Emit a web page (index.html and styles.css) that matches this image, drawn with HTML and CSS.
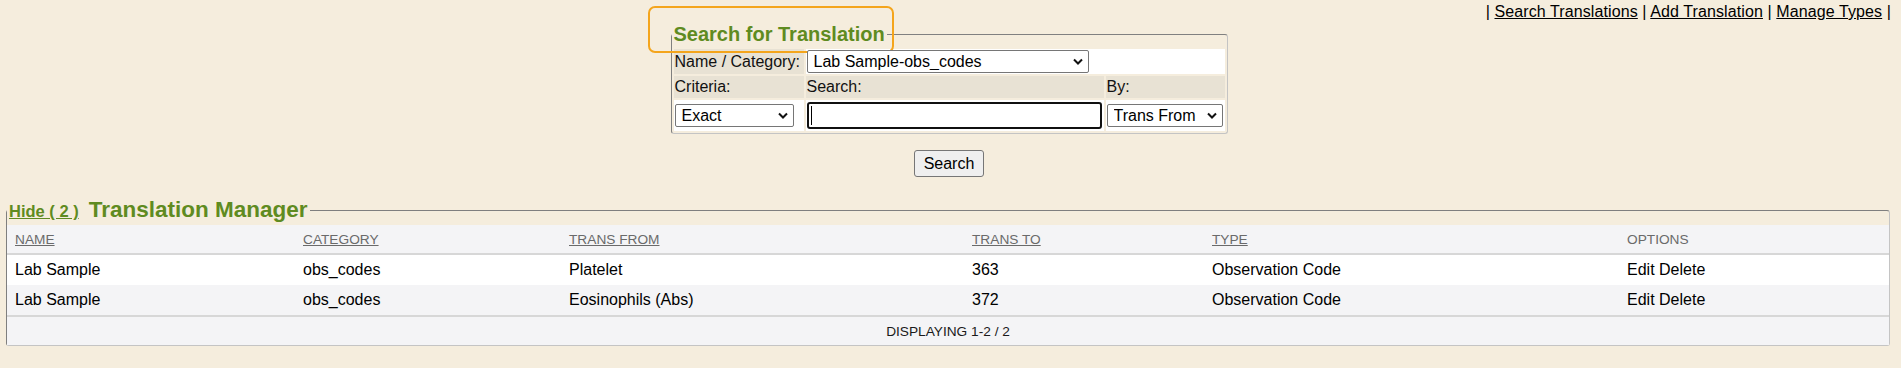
FILE: index.html
```html
<!DOCTYPE html>
<html>
<head>
<meta charset="utf-8">
<title>Translation Manager</title>
<link rel="stylesheet" href="styles.css">
</head>
<body>
<div class="toplinks">| <a href="#">Search Translations</a> | <a href="#">Add Translation</a> | <a href="#">Manage Types</a> |</div>

<div class="search-wrap">
  <form class="search-form">
    <fieldset class="search-set">
      <legend class="search-legend">Search for Translation<span class="focus-ring"></span></legend>
      <table class="search-table">
        <colgroup><col class="sc1"><col class="sc2"><col class="sc3"></colgroup>
        <tr class="r1">
          <td class="lbl">Name / Category:</td>
          <td class="val" colspan="2">
            <span class="sel sel-name"><select><option>Lab Sample-obs_codes</option></select><svg class="chev" viewBox="0 0 10 7"><path d="M1 1.5 L5 5.5 L9 1.5" fill="none" stroke="#111" stroke-width="2"/></svg></span>
          </td>
        </tr>
        <tr class="r2">
          <td class="lbl">Criteria:</td>
          <td class="lbl">Search:</td>
          <td class="lbl">By:</td>
        </tr>
        <tr class="r3">
          <td class="val">
            <span class="sel sel-exact"><select><option>Exact</option></select><svg class="chev" viewBox="0 0 10 7"><path d="M1 1.5 L5 5.5 L9 1.5" fill="none" stroke="#111" stroke-width="2"/></svg></span>
          </td>
          <td class="val">
            <span class="field"><input type="text" value=""><span class="caret"></span></span>
          </td>
          <td class="val">
            <span class="sel sel-by"><select><option>Trans From</option></select><svg class="chev" viewBox="0 0 10 7"><path d="M1 1.5 L5 5.5 L9 1.5" fill="none" stroke="#111" stroke-width="2"/></svg></span>
          </td>
        </tr>
      </table>
    </fieldset>
    <div class="btn-row"><button type="button">Search</button></div>
  </form>
</div>

<fieldset class="results">
  <legend class="results-legend"><a class="hide" href="#">Hide ( 2 )</a><span class="title">Translation Manager</span></legend>
  <table class="grid">
    <colgroup>
      <col class="g1"><col class="g2"><col class="g3"><col class="g4"><col class="g5"><col class="g6">
    </colgroup>
    <thead>
      <tr>
        <th><a href="#">NAME</a></th>
        <th><a href="#">CATEGORY</a></th>
        <th><a href="#">TRANS FROM</a></th>
        <th><a href="#">TRANS TO</a></th>
        <th><a href="#">TYPE</a></th>
        <th>OPTIONS</th>
      </tr>
    </thead>
    <tbody>
      <tr class="odd">
        <td>Lab Sample</td>
        <td>obs_codes</td>
        <td>Platelet</td>
        <td>363</td>
        <td>Observation Code</td>
        <td><span class="opt">Edit</span> <span class="opt">Delete</span></td>
      </tr>
      <tr class="alt">
        <td>Lab Sample</td>
        <td>obs_codes</td>
        <td>Eosinophils (Abs)</td>
        <td>372</td>
        <td>Observation Code</td>
        <td><span class="opt">Edit</span> <span class="opt">Delete</span></td>
      </tr>
    </tbody>
    <tfoot>
      <tr>
        <td colspan="6">DISPLAYING 1-2 / 2</td>
      </tr>
    </tfoot>
  </table>
</fieldset>
</body>
</html>
```

FILE: styles.css
```css
* { box-sizing: border-box; }

html, body {
  margin: 0;
  padding: 0;
}

body {
  background: #f5eddd;
  font-family: "Liberation Sans", Arial, sans-serif;
  font-size: 16px;
  color: #000;
}

/* top link bar */
.toplinks {
  text-align: right;
  padding: 3px 10px 0 0;
  height: 21px;
  line-height: 18px;
  white-space: nowrap;
  letter-spacing: 0.1px;
}
.toplinks a {
  color: #000;
  text-decoration: underline;
}

/* search form */
.search-wrap {
  display: flex;
  justify-content: center;
  padding-right: 3px;
  margin-top: 2px;
}
.search-form {
  width: 557px;
  margin: 0;
}
.search-set {
  margin: 0;
  padding: 1px 0 0 0;
  min-width: 0;
  border: 1px solid;
  border-color: #808080 #c4c4c4 #c4c4c4 #808080;
  border-radius: 3px;
}
.search-legend {
  position: relative;
  padding: 0 2px;
  font-size: 20px;
  line-height: 23px;
  font-weight: bold;
  color: #5f8b21;
}
.focus-ring {
  position: absolute;
  left: -24px;
  top: -17px;
  width: 246px;
  height: 47px;
  border: 2.5px solid #f4a51c;
  border-radius: 7px;
  pointer-events: none;
}

.search-table {
  border-collapse: separate;
  border-spacing: 2px;
  table-layout: fixed;
  width: 555px;
}
.sc1 { width: 130px; }
.sc2 { width: 298px; }
.sc3 { width: 119px; }

.search-table td {
  padding: 1px;
  vertical-align: middle;
  font-size: 16px;
  line-height: 18px;
  white-space: nowrap;
}
.search-table .r1 { height: 25px; }
.search-table .r2 { height: 22px; }
.search-table .r3 { height: 31px; }

.lbl {
  background: #e8e2d4;
  color: #111;
}
.val {
  background: #fff;
}

.sel {
  position: relative;
  display: inline-block;
  vertical-align: middle;
}
.sel select {
  -webkit-appearance: none;
  appearance: none;
  display: block;
  height: 23px;
  margin: 0;
  padding: 0 20px 0 6px;
  border: 1px solid #767676;
  border-radius: 2px;
  background: #fff;
  color: #000;
  font: 16px "Liberation Sans", Arial, sans-serif;
}
.sel-name select { width: 282px; }
.sel-exact select { width: 119px; }
.sel-by select { width: 116px; }

.chev {
  position: absolute;
  right: 6px;
  top: 8px;
  width: 10px;
  height: 7px;
  pointer-events: none;
}

.field {
  position: relative;
  display: block;
}
.field input {
  display: block;
  width: 295px;
  height: 27px;
  margin: 0;
  padding: 0 2px;
  border: 2px solid #101010;
  border-radius: 3px;
  background: #fff;
  outline: none;
  font: 16px "Liberation Sans", Arial, sans-serif;
}
.caret {
  position: absolute;
  left: 4px;
  top: 4px;
  width: 1px;
  height: 19px;
  background: #000;
}

.btn-row {
  display: flex;
  justify-content: center;
  margin-top: 16px;
  height: 27px;
}
.btn-row button {
  height: 27px;
  padding: 0 9px;
  border: 1px solid #767676;
  border-radius: 3px;
  background: #efefef;
  color: #000;
  font: 16px "Liberation Sans", Arial, sans-serif;
}

/* results */
.results {
  margin: 20px 11px 0 6px;
  padding: 1px 0 0 0;
  min-width: 0;
  border: 1px solid;
  border-color: #7f7f7f #c4c4c4 #c4c4c4 #7f7f7f;
  border-radius: 3px;
}
.results-legend {
  padding: 0 2px;
  line-height: 25px;
  white-space: nowrap;
  color: #5f8b21;
}
.hide {
  font-size: 16.5px;
  font-weight: bold;
  color: #5f8b21;
  text-decoration: underline;
}
.title {
  font-size: 22.5px;
  font-weight: bold;
  color: #5f8b21;
  margin-left: 10px;
}

.grid {
  width: 100%;
  border-collapse: separate;
  border-spacing: 0;
  table-layout: fixed;
}
.g1 { width: 288px; }
.g2 { width: 266px; }
.g3 { width: 403px; }
.g4 { width: 240px; }
.g5 { width: 415px; }
.g6 { width: 270px; }

.grid th,
.grid td {
  padding: 0 8px;
  text-align: left;
  vertical-align: middle;
  white-space: nowrap;
}
.grid thead tr {
  height: 30px;
  background: #f4f4f6;
}
.grid th {
  font-size: 13.7px;
  font-weight: normal;
  color: #6a6a6a;
  border-bottom: 2px solid #d7d7d7;
}
.grid th a {
  color: #6a6a6a;
  text-decoration: underline;
}
.grid tbody tr { height: 30px; }
.grid td {
  font-size: 16px;
  color: #000;
}
.grid tr.odd { background: #fff; }
.grid tr.alt { background: #f4f4f6; }
.grid tfoot tr {
  height: 30px;
  background: #f4f4f6;
}
.grid tfoot td {
  border-top: 2px solid #d7d7d7;
  text-align: center;
  font-size: 13.7px;
  color: #1a1a1a;
}
```
